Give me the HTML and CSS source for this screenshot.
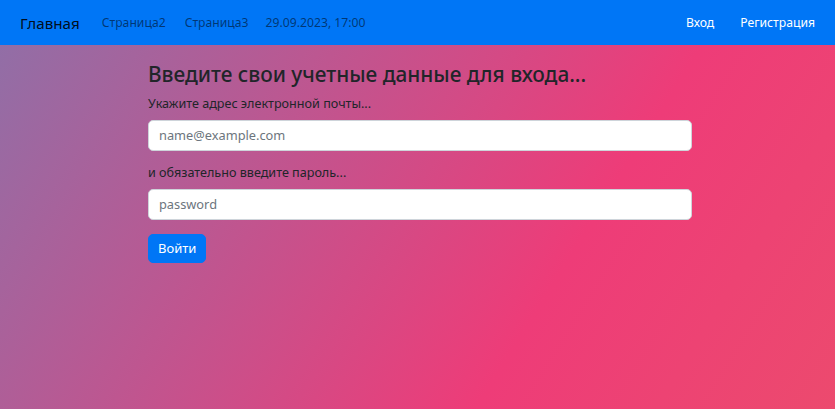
FILE: index.html
```html
<!DOCTYPE html>
<html lang="ru">
<head>
<meta charset="utf-8">
<title>Вход</title>
<link rel="stylesheet" href="styles.css">
</head>
<body>
<nav class="navbar">
  <a class="brand" href="#">Главная</a>
  <div class="nav-left">
    <a class="nav-link" href="#">Страница2</a>
    <a class="nav-link" href="#">Страница3</a>
    <span class="nav-date">29.09.2023, 17:00</span>
  </div>
  <div class="nav-right">
    <a class="nav-link light" href="#">Вход</a>
    <a class="nav-link light" href="#">Регистрация</a>
  </div>
</nav>
<main class="content">
  <h1 class="title">Введите свои учетные данные для входа...</h1>
  <form class="login-form">
    <label class="field-label" for="email">Укажите адрес электронной почты...</label>
    <input class="field" id="email" type="email" placeholder="name@example.com">
    <label class="field-label second" for="password">и обязательно введите пароль...</label>
    <input class="field" id="password" type="password" placeholder="password">
    <div class="actions">
      <button class="btn" type="button">Войти</button>
    </div>
  </form>
</main>
</body>
</html>
```

FILE: styles.css
```css
* { box-sizing: border-box; }

html, body {
  margin: 0;
  min-height: 100%;
}

body {
  min-height: 409px;
  font-family: "Noto Sans", "Open Sans", sans-serif;
  font-size: 12.6px;
  color: #212529;
  background: linear-gradient(122deg, #8e70a8 0%, #ee3c78 67%, #ec4a6e 100%);
}

.navbar {
  display: flex;
  align-items: center;
  height: 45px;
  padding: 0 20px;
  background: #0076f6;
}

.brand {
  font-size: 15.2px;
  color: rgba(0, 0, 0, 0.9);
  text-decoration: none;
  margin-right: 22px;
}

.nav-left {
  display: flex;
  align-items: center;
  gap: 19px;
}

.nav-link {
  font-size: 12.2px;
  color: rgba(0, 0, 0, 0.55);
  text-decoration: none;
}

.nav-date {
  font-size: 12.2px;
  color: rgba(0, 0, 0, 0.55);
  margin-left: -2px;
}

.nav-right {
  display: flex;
  align-items: center;
  gap: 26px;
  margin-left: auto;
}

.nav-link.light {
  color: #ffffff;
}

.content {
  width: 544px;
  margin-left: 148px;
  padding-top: 17px;
}

.title {
  margin: 0 0 7px;
  font-size: 20.8px;
  font-weight: 500;
  line-height: 1.2;
  color: #212529;
}

.login-form {
  display: flex;
  flex-direction: column;
}

.field-label {
  line-height: 20px;
  margin-bottom: 6px;
}

.field-label.second {
  margin-top: 12px;
}

.field {
  height: 31px;
  padding: 0 10px;
  font-family: inherit;
  font-size: 12.8px;
  color: #212529;
  background: #ffffff;
  border: 1px solid #ced4da;
  border-radius: 5px;
}

.field::placeholder {
  color: #6c757d;
}

.actions {
  margin-top: 14px;
}

.btn {
  height: 29px;
  padding: 0 9px;
  font-family: inherit;
  font-size: 13px;
  color: #ffffff;
  background: #0076f6;
  border: 1px solid #0076f6;
  border-radius: 5px;
}
```
